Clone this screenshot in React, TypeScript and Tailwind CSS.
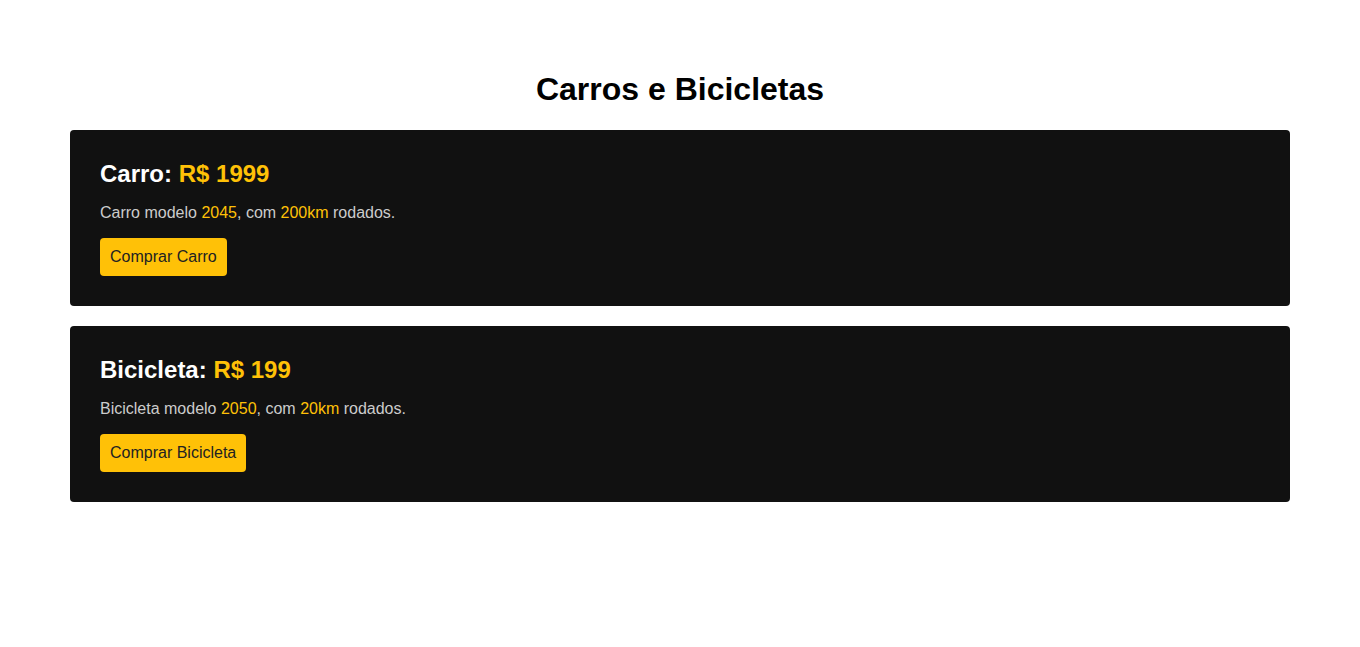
import React from 'react';

type Item = {
  nome: string;
  preco: number;
  modelo: number;
  km: number;
};

const itens: Item[] = [
  { nome: 'Carro', preco: 1999, modelo: 2045, km: 200 },
  { nome: 'Bicicleta', preco: 199, modelo: 2050, km: 20 },
];

function Produto({ item }: { item: Item }) {
  return (
    <div className="bg-[#111111] rounded-[4px] p-[30px]">
      <h2 className="text-[24px] leading-[28px] font-bold text-white">
        {item.nome}: <span className="text-[#ffc107]">R$ {item.preco}</span>
      </h2>
      <p className="mt-[15px] text-[16px] leading-[19px] text-[#cccccc]">
        {item.nome} modelo <span className="text-[#ffc107]">{item.modelo}</span>, com{' '}
        <span className="text-[#ffc107]">{item.km}km</span> rodados.
      </p>
      <button className="mt-[16px] bg-[#ffc107] text-[#222222] text-[16px] leading-[20px] px-[10px] py-[9px] rounded-[4px]">
        Comprar {item.nome}
      </button>
    </div>
  );
}

export default function App() {
  return (
    <div className="min-h-[647px] bg-white px-[70px] pt-[71px] font-['Liberation_Sans',Arial,sans-serif]">
      <h1 className="text-center text-[32px] leading-[37px] font-bold text-black mb-[22px]">
        Carros e Bicicletas
      </h1>
      <div className="flex flex-col gap-[20px]">
        {itens.map((item) => (
          <Produto key={item.nome} item={item} />
        ))}
      </div>
    </div>
  );
}
